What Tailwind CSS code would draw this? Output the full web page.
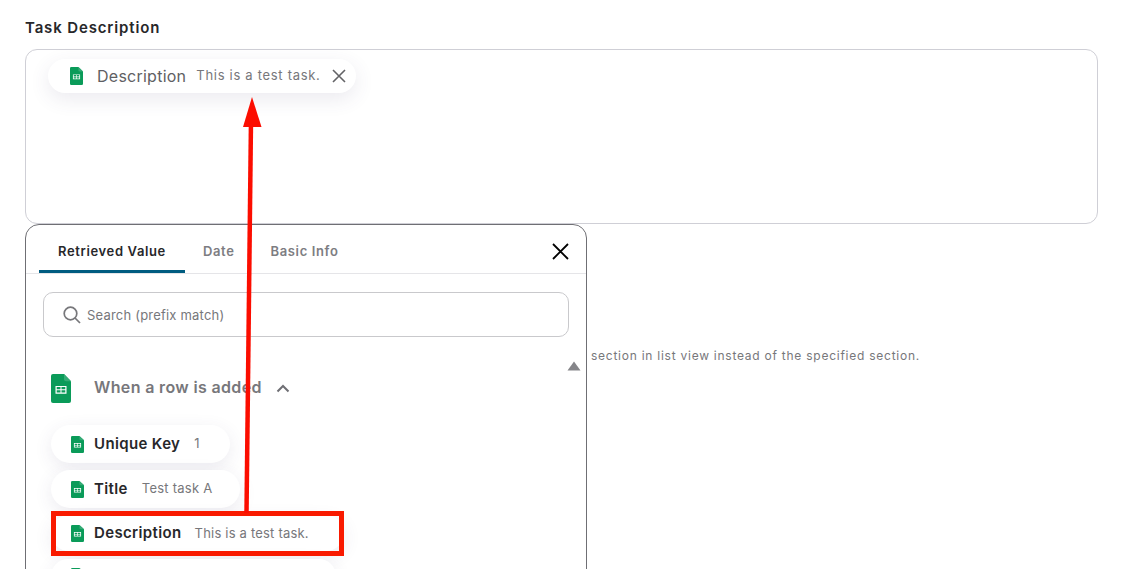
<!DOCTYPE html>
<html lang="en">
  <head>
    <meta charset="UTF-8" />
    <title>Task Description</title>
    <script src="https://cdn.jsdelivr.net/npm/@tailwindcss/browser@4"></script>
  </head>

  <body class="bg-white font-['Inter',sans-serif] overflow-hidden">
    <svg class="hidden">
      <symbol id="sheets" viewBox="0 0 20 28" preserveAspectRatio="none">
        <path d="M2 0H13L20 7V26a2 2 0 0 1-2 2H2a2 2 0 0 1-2-2V2a2 2 0 0 1 2-2z" fill="#0a9b59" />
        <path d="M13 0L20 7H15a2 2 0 0 1-2-2z" fill="#35ab76" />
        <path d="M4.500 11.500H15.500V19H4.500zM5.700 12.600V14.700H9.500V12.600zM10.500 12.600V14.700H14.300V12.600zM5.700 15.800V17.900H9.500V15.800zM10.500 15.800V17.900H14.300V15.800z" fill="#fff" fill-rule="evenodd" />
      </symbol>
    </svg>

    <div class="relative h-[569px] overflow-hidden pl-[25px] pr-[28px] pt-[18px]">
      <!-- Field -->
      <p class="text-[15px] leading-[20px] font-semibold tracking-[0.85px] text-[#27272a]">Task Description</p>
      <div class="mt-[11px] h-[175px] rounded-[12px] border border-[#cfcfd6] pl-[22px] pt-[9px]">
        <div class="inline-flex h-[34px] w-[308px] items-center rounded-full bg-white pl-[22px] shadow-[0_6px_20px_rgba(70,60,110,0.11)]">
          <svg class="h-[18px] w-[13px]"><use href="#sheets" /></svg>
          <span class="ml-[14px] -mt-px text-[16px] tracking-[0.25px] text-[#5f5f63]">Description</span>
          <span class="ml-[10px] text-[13px] tracking-[0.7px] text-[#77777b]">This is a test task.</span>
          <svg class="ml-[11px] h-[14px] w-[14px]" viewBox="0 0 14 14" fill="none" stroke="#636366" stroke-width="1.6">
            <path d="M1 1L13 13M13 1L1 13" />
          </svg>
        </div>
      </div>

      <p class="mt-[124px] pl-[566px] text-[12px] leading-[16px] tracking-[0.75px] text-[#77777b]">section in list view instead of the specified section.</p>

      <!-- Value picker popup -->
      <div class="absolute left-[25px] top-[224px] h-[380px] w-[562px] rounded-[14px] border border-[#6f6f74] bg-white">
        <div class="flex h-[49px] items-center border-b border-[#e5e5e8] pl-[13px] pr-[17px]">
          <div class="flex h-[48px] w-[146px] items-center justify-center border-b-[3px] border-[#005c80] pt-[8px] text-[13px] font-semibold tracking-[0.63px] text-[#27272a]">Retrieved Value</div>
          <div class="ml-[18px] pt-[5px] text-[13px] font-semibold tracking-[0.63px] text-[#7d7d82]">Date</div>
          <div class="ml-[36px] pt-[5px] text-[13px] font-semibold tracking-[0.63px] text-[#7d7d82]">Basic Info</div>
          <svg class="ml-auto mt-[4px] h-[17px] w-[17px]" viewBox="0 0 17 17" fill="none" stroke="#000" stroke-width="1.8">
            <path d="M1 1L16 16M16 1L1 16" />
          </svg>
        </div>

        <div class="mx-[17px] mt-[18px] flex h-[45px] items-center rounded-[10px] border border-[#c9c9cc] pl-[19px]">
          <svg class="h-[18px] w-[18px]" viewBox="0 0 18 18" fill="none" stroke="#77777b" stroke-width="1.7">
            <circle cx="7.500" cy="7.500" r="6.300" />
            <path d="M12 12L17 17" />
          </svg>
          <span class="ml-[6px] pt-[2px] text-[13px] tracking-[0.2px] text-[#77777b]">Search (prefix match)</span>
        </div>

        <div class="relative">
          <svg class="absolute right-[5px] top-[24px] -mt-[37px] h-[10px] w-[14px]" viewBox="0 0 14 10" fill="#858589">
            <path d="M7 0.500L13.500 9.500H0.500z" />
          </svg>
          <div class="ml-[25px] mt-[37px] flex h-[28px] items-center">
            <svg class="h-[29px] w-[20px]"><use href="#sheets" /></svg>
            <span class="ml-[23px] -mt-[2px] text-[16px] font-semibold tracking-[0.35px] text-[#77777b]">When a row is added</span>
            <svg class="ml-[14px] h-[9px] w-[14px]" viewBox="0 0 14 9" fill="none" stroke="#6f6f74" stroke-width="2">
              <path d="M1.500 7.500L7 2L12.500 7.500" />
            </svg>
          </div>

          <div class="ml-[25px] mt-[23px] flex flex-col items-start gap-[7px]">
            <div class="flex h-[38px] w-[179px] items-center rounded-full bg-white pl-[20px] shadow-[0_5px_18px_rgba(70,60,110,0.10)]">
              <svg class="h-[17px] w-[13px]"><use href="#sheets" /></svg>
              <span class="ml-[10px] text-[15px] font-semibold tracking-[0.36px] text-[#27272a]">Unique Key</span>
              <span class="ml-[14px] text-[13px] tracking-[0.3px] text-[#77777b]">1</span>
            </div>
            <div class="flex h-[38px] w-[189px] items-center rounded-full bg-white pl-[20px] shadow-[0_5px_18px_rgba(70,60,110,0.10)]">
              <svg class="h-[17px] w-[13px]"><use href="#sheets" /></svg>
              <span class="ml-[10px] text-[15px] font-semibold tracking-[0.36px] text-[#27272a]">Title</span>
              <span class="ml-[14px] text-[13px] tracking-[0.25px] text-[#77777b]">Test task A</span>
            </div>
            <div class="flex h-[36px] w-[293px] items-center rounded-full bg-white pl-[20px] shadow-[0_5px_18px_rgba(70,60,110,0.10)]">
              <svg class="h-[17px] w-[13px]"><use href="#sheets" /></svg>
              <span class="ml-[10px] text-[15px] font-semibold tracking-[0.36px] text-[#27272a]">Description</span>
              <span class="ml-[13px] mt-[2px] text-[13px] tracking-[0.2px] text-[#77777b]">This is a test task.</span>
            </div>
            <div class="mt-px flex h-[34px] w-[285px] items-center rounded-full bg-white pl-[20px] shadow-[0_5px_18px_rgba(70,60,110,0.10)]">
              <svg class="h-[17px] w-[13px]"><use href="#sheets" /></svg>
            </div>
          </div>
        </div>
      </div>

      <!-- Red annotation -->
      <div class="absolute left-[51px] top-[511px] h-[45px] w-[293px] border-[5px] border-[#f91a00]"></div>
      <svg class="absolute left-0 top-0 h-[569px] w-[1126px]" viewBox="0 0 1126 569" fill="#fc0d00">
        <path d="M246.500 513L251 120" stroke="#fc0d00" stroke-width="4.500" fill="none" />
        <path d="M252 97L261.500 127H243z" />
      </svg>
    </div>
  </body>
</html>
